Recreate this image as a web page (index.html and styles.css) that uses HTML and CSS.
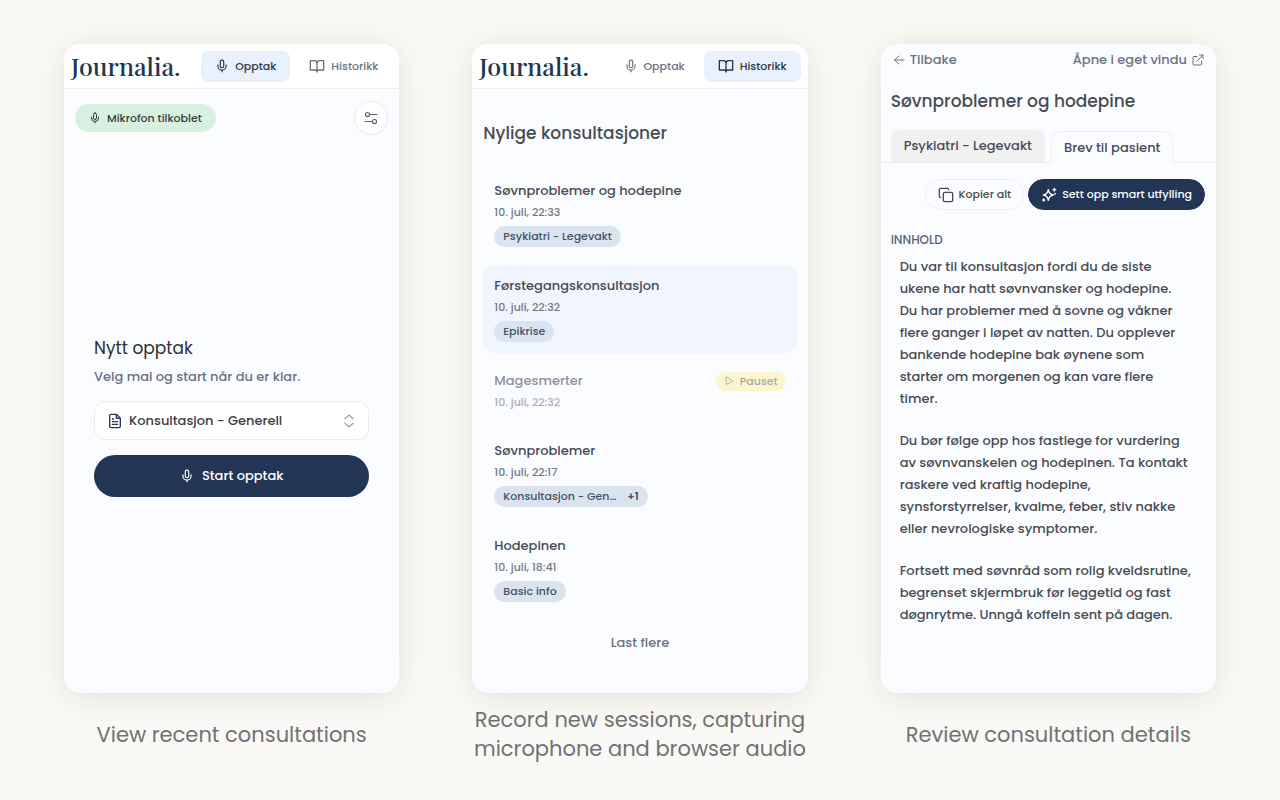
FILE: index.html
```
<!DOCTYPE html>
<html lang="no">
<head>
    <meta charset="UTF-8">
    <meta name="viewport" content="width=device-width, initial-scale=1.0">
    <title>Journalia</title>
    <link rel="stylesheet" href="styles.css">
</head>
<body>
    <!-- Shared icons -->
    <svg class="sprite" aria-hidden="true">
        <symbol id="mic" viewBox="0 0 24 24"><path d="M12 2a3 3 0 0 0-3 3v7a3 3 0 0 0 6 0V5a3 3 0 0 0-3-3Z"/><path d="M19 10v2a7 7 0 0 1-14 0v-2M12 19v3"/></symbol>
        <symbol id="book" viewBox="0 0 24 24"><path d="M12 6v15M2 4h6a4 4 0 0 1 4 4 4 4 0 0 1 4-4h6v14h-7a3 3 0 0 0-3 3 3 3 0 0 0-3-3H2Z"/></symbol>
    </svg>

    <main class="showcase">
        <!-- Recording -->
        <figure class="panel">
            <div class="card">
                <header class="topbar">
                    <a class="logo" href="#">Journalia.</a>
                    <nav class="nav">
                        <button class="nav-btn active"><svg class="icon"><use href="#mic"/></svg>Opptak</button>
                        <button class="nav-btn"><svg class="icon large"><use href="#book"/></svg>Historikk</button>
                    </nav>
                </header>
                <div class="status-row">
                    <span class="mic-status"><svg class="icon small"><use href="#mic"/></svg>Mikrofon tilkoblet</span>
                    <button class="round-btn" aria-label="Innstillinger">
                        <svg class="icon" viewBox="0 0 24 24"><circle cx="6" cy="6" r="3.5"/><path d="M9.500 6H22M2 18h12.500"/><circle cx="18" cy="18" r="3.5"/></svg>
                    </button>
                </div>
                <div class="record">
                    <h2>Nytt opptak</h2>
                    <p>Velg mal og start når du er klar.</p>
                    <div class="template-box">
                        <svg class="icon large file" viewBox="0 0 24 24"><path d="M14 2H6a2 2 0 0 0-2 2v16a2 2 0 0 0 2 2h12a2 2 0 0 0 2-2V8ZM14 2v6h6M8 9h2M8 13h8M8 17h8"/></svg>
                        <select class="template" aria-label="Mal">
                            <option>Konsultasjon - Generell</option>
                        </select>
                        <svg class="icon chevrons" viewBox="0 0 24 24"><path d="m5 8 7-6 7 6M5 16l7 6 7-6"/></svg>
                    </div>
                    <button class="start-btn"><svg class="icon"><use href="#mic"/></svg>Start opptak</button>
                </div>
            </div>
            <figcaption>View recent consultations</figcaption>
        </figure>

        <!-- History -->
        <figure class="panel">
            <div class="card">
                <header class="topbar">
                    <a class="logo" href="#">Journalia.</a>
                    <nav class="nav">
                        <button class="nav-btn"><svg class="icon"><use href="#mic"/></svg>Opptak</button>
                        <button class="nav-btn active"><svg class="icon large"><use href="#book"/></svg>Historikk</button>
                    </nav>
                </header>
                <div class="history">
                    <h2>Nylige konsultasjoner</h2>
                    <ul class="list">
                        <li class="item">
                            <h3>Søvnproblemer og hodepine</h3>
                            <time>10. juli, 22:33</time>
                            <span class="chip">Psykiatri - Legevakt</span>
                        </li>
                        <li class="item selected">
                            <h3>Førstegangskonsultasjon</h3>
                            <time>10. juli, 22:32</time>
                            <span class="chip">Epikrise</span>
                        </li>
                        <li class="item paused">
                            <div class="item-head">
                                <h3>Magesmerter</h3>
                                <span class="paused-tag"><svg class="icon tiny" viewBox="0 0 24 24"><path d="M5 3v18l16-9Z"/></svg>Pauset</span>
                            </div>
                            <time>10. juli, 22:32</time>
                        </li>
                        <li class="item">
                            <h3>Søvnproblemer</h3>
                            <time>10. juli, 22:17</time>
                            <span class="chip">Konsultasjon - Gen… <b>+1</b></span>
                        </li>
                        <li class="item">
                            <h3>Hodepinen</h3>
                            <time>10. juli, 18:41</time>
                            <span class="chip">Basic info</span>
                        </li>
                    </ul>
                    <button class="more-btn">Last flere</button>
                </div>
            </div>
            <figcaption>Record new sessions, capturing<br>microphone and browser audio</figcaption>
        </figure>

        <!-- Consultation details -->
        <figure class="panel">
            <div class="card">
                <div class="links">
                    <a href="#"><svg class="icon small" viewBox="0 0 24 24"><path d="M22 12H3M12 4l-9 8 9 8"/></svg>Tilbake</a>
                    <a href="#">Åpne i eget vindu<svg class="icon small" viewBox="0 0 24 24"><path d="M10 5H4a2 2 0 0 0-2 2v13a2 2 0 0 0 2 2h13a2 2 0 0 0 2-2v-6M15 2h7v7M22 2 10 14"/></svg></a>
                </div>
                <h2 class="details-title">Søvnproblemer og hodepine</h2>
                <div class="tabs" role="tablist">
                    <button class="tab" role="tab" aria-selected="false">Psykiatri - Legevakt</button>
                    <button class="tab current" role="tab" aria-selected="true">Brev til pasient</button>
                </div>
                <div class="actions">
                    <button class="action"><svg class="icon large" viewBox="0 0 24 24"><rect x="8" y="8" width="14" height="14" rx="2"/><path d="M4 16a2 2 0 0 1-2-2V4a2 2 0 0 1 2-2h10a2 2 0 0 1 2 2"/></svg>Kopier alt</button>
                    <button class="action dark"><svg class="icon large" viewBox="0 0 24 24"><path d="M11 4c.6 4.800 2.600 7 7.500 8-4.900 1-6.900 3.200-7.500 8-.6-4.800-2.600-7-7.500-8 4.900-1 6.900-3.200 7.500-8ZM20 2v4M22 4h-4M4 18v3M5.500 19.500h-3"/><circle cx="21" cy="10" r=".5"/></svg>Sett opp smart utfylling</button>
                </div>
                <article class="letter">
                    <h3>INNHOLD</h3>
                    <p>Du var til konsultasjon fordi du de siste<br>
                        ukene har hatt søvnvansker og hodepine.<br>
                        Du har problemer med å sovne og våkner<br>
                        flere ganger i løpet av natten. Du opplever<br>
                        bankende hodepine bak øynene som<br>
                        starter om morgenen og kan vare flere<br>
                        timer.</p>
                    <p>Du bør følge opp hos fastlege for vurdering<br>
                        av søvnvanskelen og hodepinen. Ta kontakt<br>
                        raskere ved kraftig hodepine,<br>
                        synsforstyrrelser, kvalme, feber, stiv nakke<br>
                        eller nevrologiske symptomer.</p>
                    <p>Fortsett med søvnråd som rolig kveldsrutine,<br>
                        begrenset skjermbruk før leggetid og fast<br>
                        døgnrytme. Unngå koffein sent på dagen.</p>
                </article>
            </div>
            <figcaption>Review consultation details</figcaption>
        </figure>
    </main>
</body>
</html>
```
FILE: styles.css
```
* { margin: 0; padding: 0; box-sizing: border-box; }

body {
    font-family: Poppins, Inter, sans-serif;
    font-weight: 500;
    background: #faf9f5;
    color: #484c52;
}

button, select {
    font: inherit;
    color: inherit;
    border: none;
    background: none;
    cursor: pointer;
}

a { color: inherit; text-decoration: none; }

h2, h3 { font-weight: 500; }

.sprite { display: none; }

.icon {
    width: 14px;
    height: 14px;
    flex: none;
    fill: none;
    stroke: currentColor;
    stroke-width: 2;
    stroke-linecap: round;
    stroke-linejoin: round;
}

.icon.tiny { width: 10px; height: 10px; }
.icon.small { width: 12px; height: 12px; }
.icon.large { width: 16px; height: 16px; }

.showcase {
    min-height: 100vh;
    padding: 44px 64px 37px;
    display: grid;
    grid-template-columns: repeat(3, minmax(0, 1fr));
    gap: 73px;
}

.panel {
    display: flex;
    flex-direction: column;
}

.card {
    flex: 1;
    background: #fbfcff;
    border-radius: 16px;
    box-shadow: 0 4px 32px rgba(60,55,35,0.12);
    overflow: hidden;
}

figcaption {
    min-height: 58px;
    margin-top: 12px;
    display: flex;
    align-items: center;
    justify-content: center;
    text-align: center;
    font-size: 21px;
    font-weight: 400;
    line-height: 29px;
    color: #707276;
    white-space: nowrap;
}

/* Top bar */
.topbar {
    height: 45px;
    padding: 0 7px;
    display: flex;
    align-items: center;
    justify-content: space-between;
    background: white;
    border-bottom: 1px solid #eceef4;
}

.logo {
    font-family: "Playfair Display", "Liberation Serif", serif;
    font-size: 25px;
    line-height: 40px;
    color: #223554;
}

.nav { display: flex; gap: 5px; }

.nav-btn {
    height: 31px;
    padding: 0 14px;
    display: flex;
    align-items: center;
    gap: 6px;
    border-radius: 7px;
    font-size: 11px;
    color: #6a717d;
}

.nav-btn.active {
    background: #e9f1ff;
    color: #2b3546;
}

/* Recording */
.status-row {
    padding: 12px 11px;
    display: flex;
    align-items: center;
    justify-content: space-between;
}

.mic-status {
    height: 28px;
    padding: 0 14px;
    display: flex;
    align-items: center;
    gap: 6px;
    border-radius: 14px;
    background: #d6f1e0;
    font-size: 11px;
    color: #363b42;
}

.round-btn {
    width: 34px;
    height: 34px;
    display: flex;
    align-items: center;
    justify-content: center;
    border: 1px solid #e9ebf3;
    border-radius: 50%;
    background: white;
    color: #596171;
}

.record { padding: 188px 30px 0; }

.record h2 {
    font-size: 17px;
    font-weight: 400;
    line-height: 26px;
    color: #2d3136;
}

.record p {
    margin: 6px 0 14px;
    font-size: 13px;
    line-height: 20px;
    color: #6a7285;
}

.template-box {
    height: 39px;
    padding: 0 12px;
    display: flex;
    align-items: center;
    gap: 6px;
    border: 1px solid #e9ebf3;
    border-radius: 11px;
    background: white;
}

.template {
    flex: 1;
    min-width: 0;
    appearance: none;
    font-size: 13px;
    color: #3c4046;
}

.file { color: #26375a; }
.chevrons { color: #8b919c; }

.start-btn {
    width: 100%;
    height: 42px;
    margin-top: 15px;
    display: flex;
    align-items: center;
    justify-content: center;
    gap: 8px;
    border-radius: 21px;
    background: #223554;
    color: white;
    font-size: 13px;
}

/* History */
.history { padding: 31px 11px 0; }

.history h2 {
    font-size: 17px;
    line-height: 26px;
}

.list {
    margin-top: 24px;
    display: flex;
    flex-direction: column;
    gap: 7px;
    list-style: none;
}

.item {
    padding: 10px 11px 11px;
    border-radius: 12px;
}

.item.selected { background: #f0f5ff; }

.item h3 {
    font-size: 13px;
    line-height: 22px;
}

.item time {
    display: block;
    font-size: 11px;
    line-height: 20px;
    color: #757a81;
}

.item-head {
    display: flex;
    align-items: center;
    justify-content: space-between;
}

.item.paused { opacity: 0.6; }

.paused-tag {
    height: 19px;
    padding: 0 8px;
    display: flex;
    align-items: center;
    gap: 6px;
    border-radius: 10px;
    background: #fcf3b0;
    font-size: 11px;
    color: #6c7178;
}

.chip {
    display: table;
    margin-top: 4px;
    padding: 0 9px;
    border-radius: 11px;
    background: #dae4f0;
    color: #465064;
    font-size: 11px;
    line-height: 21px;
}

.chip b {
    margin-left: 8px;
    font-weight: 600;
}

.more-btn {
    display: block;
    margin: 19px auto 0;
    font-size: 13px;
    line-height: 22px;
    color: #6c737c;
}

/* Details */
.links {
    padding: 5px 12px;
    display: flex;
    justify-content: space-between;
    font-size: 13px;
    line-height: 22px;
    color: #6c737f;
}

.links a {
    display: flex;
    align-items: center;
    gap: 5px;
}

.details-title {
    padding: 11px 10px 0;
    font-size: 17px;
    line-height: 28px;
}

.tabs {
    margin-top: 15px;
    padding: 0 10px;
    display: flex;
    align-items: flex-end;
    gap: 6px;
    border-bottom: 1px solid #eceef6;
}

.tab {
    height: 32px;
    padding: 0 13px;
    border-radius: 8px 8px 0 0;
    background: #f1f1f2;
    font-size: 13px;
    white-space: nowrap;
}

.tab.current {
    padding: 0 12px;
    margin-bottom: -1px;
    border: 1px solid #eceef6;
    border-bottom: none;
    background: #fbfcff;
}

.actions {
    padding: 16px 11px 0;
    display: flex;
    justify-content: flex-end;
    gap: 4px;
}

.action {
    height: 31px;
    padding: 0 12px;
    display: flex;
    align-items: center;
    gap: 5px;
    border: 1px solid #eceef6;
    border-radius: 16px;
    font-size: 11px;
    white-space: nowrap;
}

.action.dark {
    border-color: #223554;
    background: #223554;
    color: white;
}

.letter { padding: 20px 10px 0; }

.letter h3 {
    margin-bottom: 6px;
    font-size: 12px;
    line-height: 20px;
    color: #5c6474;
}

.letter p {
    margin-bottom: 20px;
    padding-left: 9px;
    font-size: 13px;
    line-height: 22px;
    white-space: nowrap;
}
```
